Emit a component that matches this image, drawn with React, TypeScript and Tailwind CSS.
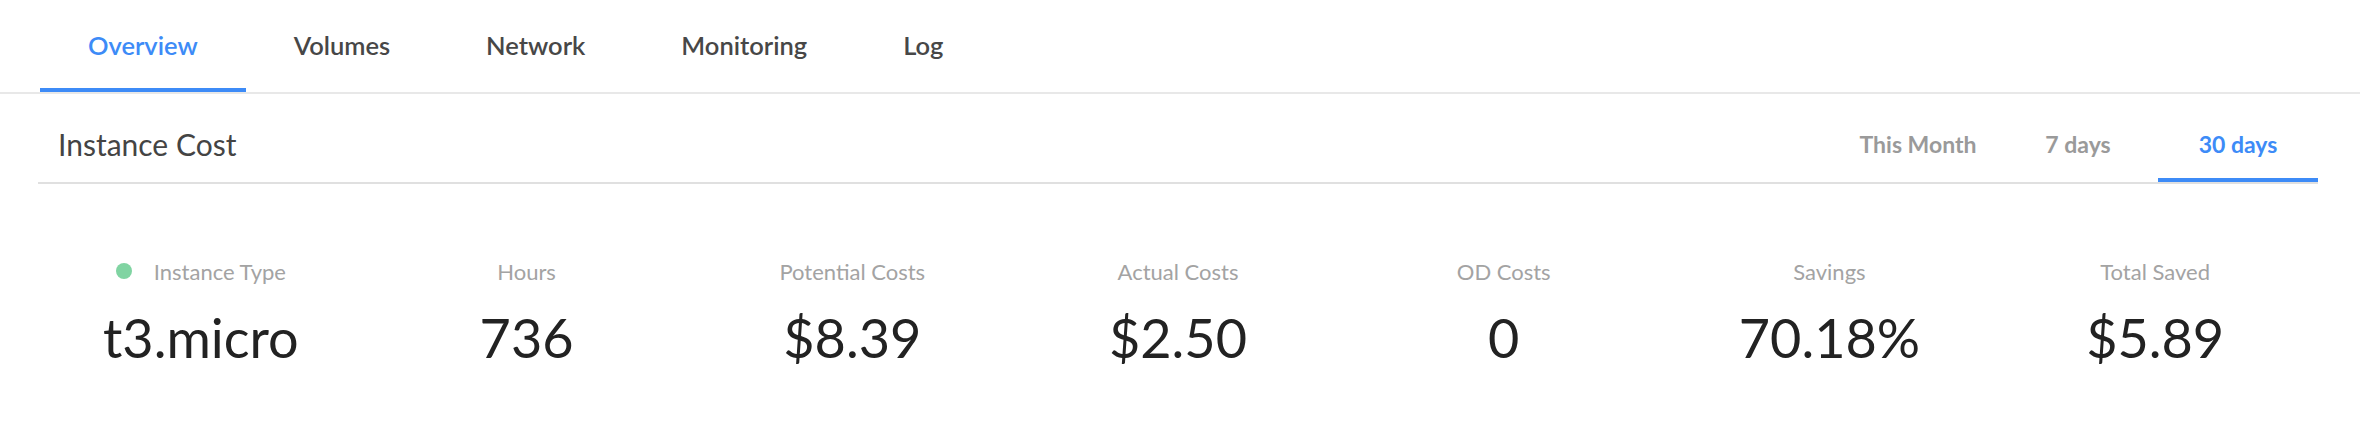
import React from 'react'

const tabs = ['Overview', 'Volumes', 'Network', 'Monitoring', 'Log']
const ranges = ['This Month', '7 days', '30 days']

const stats = [
  { label: 'Instance Type', value: 't3.micro', dot: true },
  { label: 'Hours', value: '736' },
  { label: 'Potential Costs', value: '$8.39' },
  { label: 'Actual Costs', value: '$2.50' },
  { label: 'OD Costs', value: '0' },
  { label: 'Savings', value: '70.18%' },
  { label: 'Total Saved', value: '$5.89' },
]

export default function App() {
  return (
    <div className="w-[2360px] h-[424px] bg-white font-['Lato',sans-serif]">
      <nav className="flex pl-[40px] border-b-2 border-[#e8e8e8]">
        {tabs.map((t, i) => (
          <div
            key={t}
            className={
              i === 0
                ? 'h-[92px] px-[48px] flex items-center border-b-4 border-[#3d8bf7] pt-[2px] text-[25.5px] font-semibold text-[#3d8bf7]'
                : 'h-[92px] px-[48px] flex items-center border-b-4 border-transparent pt-[2px] text-[25.5px] font-semibold text-[#474747]'
            }
          >
            {t}
          </div>
        ))}
      </nav>

      <div className="ml-[38px] mr-[42px] mt-[16px] flex items-stretch justify-between border-b-2 border-[#e0e0e0]">
        <h2 className="self-center pb-[4px] pl-[20px] text-[30px] text-[#444]">Instance Cost</h2>
        <div className="flex">
          {ranges.map((r, i) => (
            <div
              key={r}
              className={
                i === 2
                  ? 'w-[160px] h-[72px] flex items-center justify-center border-b-4 border-[#3d8bf7] text-[23px] font-bold text-[#3d8bf7]'
                  : 'w-[160px] h-[72px] flex items-center justify-center border-b-4 border-transparent text-[23px] font-bold text-[#9a9a9a]'
              }
            >
              {r}
            </div>
          ))}
        </div>
      </div>

      <div className="ml-[38px] mr-[42px] mt-[72px] grid grid-cols-7">
        {stats.map((s) => (
          <div key={s.label} className="flex flex-col items-center">
            <div className="flex items-center h-[30px] text-[22px] font-normal text-[#a3a3a3]">
              {s.dot && <span className="w-[16px] h-[16px] rounded-full bg-[#80d4a2] mr-[22px]" />}
              {s.label}
            </div>
            <div className="mt-[25px] text-[54px] leading-none font-normal text-[#222]">{s.value}</div>
          </div>
        ))}
      </div>
    </div>
  )
}
